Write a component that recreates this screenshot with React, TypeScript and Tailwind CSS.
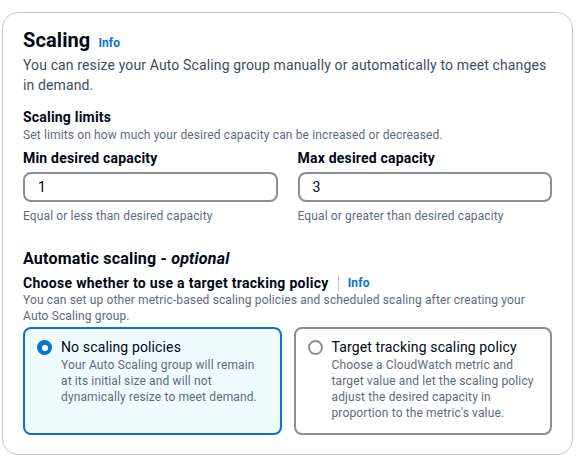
import React from 'react'

const font = { fontFamily: 'Roboto, "Open Sans", sans-serif' }

function Radio({ checked }: { checked?: boolean }) {
  return checked ? (
    <span className="mt-[3px] flex h-[15px] w-[15px] shrink-0 items-center justify-center rounded-full bg-[#0972d3]">
      <span className="h-[6px] w-[6px] rounded-full bg-white" />
    </span>
  ) : (
    <span className="mt-[3px] h-[15px] w-[15px] shrink-0 rounded-full border-2 border-[#8c8c94] bg-white" />
  )
}

function Tile({ checked, title, text }: { checked?: boolean; title: string; text: string }) {
  return (
    <div
      className={
        'flex gap-[9px] rounded-lg border-2 px-[12px] pt-[8px] pb-[12px] ' +
        (checked ? 'border-[#0972d3] bg-[#f0fbff]' : 'border-[#8c8c94] bg-white')
      }
    >
      <Radio checked={checked} />
      <div>
        <div className="text-[14px] leading-[20px] text-[#000716]">{title}</div>
        <div className="text-[12px] leading-[16px] text-[#5f6b7a]">{text}</div>
      </div>
    </div>
  )
}

function Field({ label, value, hint }: { label: string; value: string; hint: string }) {
  return (
    <div className="flex flex-col">
      <div className="text-[14px] font-bold leading-[20px] tracking-[0.2px] text-[#000716]">{label}</div>
      <div className="mt-[4px] flex h-[30px] items-center rounded-lg border-2 border-[#8c8c94] px-[13px] text-[14px] text-[#000716]">
        {value}
      </div>
      <div className="mt-[6px] text-[12px] leading-[16px] text-[#5f6b7a]">{hint}</div>
    </div>
  )
}

export default function App() {
  return (
    <div className="h-[469px] w-[585px] bg-white pt-[12px] pl-[2px] tracking-[0.13px]" style={font}>
      <div className="h-[443px] w-[571px] rounded-2xl border border-[#c6c6cd] px-[20px] pt-[15px]">
        <div className="flex items-baseline gap-[8px]">
          <h2 className="text-[20px] font-bold leading-[24px] tracking-[0.1px] text-[#000716]">Scaling</h2>
          <a className="text-[12px] font-bold text-[#0972d3]">Info</a>
        </div>
        <p className="mt-[3px] text-[14px] leading-[20px] text-[#414d5c]">
          You can resize your Auto Scaling group manually or automatically to meet changes in demand.
        </p>

        <div className="mt-[12px] text-[14px] font-bold leading-[20px] tracking-[0.2px] text-[#000716]">
          Scaling limits
        </div>
        <div className="text-[12px] leading-[16px] text-[#5f6b7a]">
          Set limits on how much your desired capacity can be increased or decreased.
        </div>

        <div className="mt-[5px] grid grid-cols-2 gap-[20px]">
          <Field label="Min desired capacity" value="1" hint="Equal or less than desired capacity" />
          <Field label="Max desired capacity" value="3" hint="Equal or greater than desired capacity" />
        </div>

        <h3 className="mt-[24px] text-[16px] font-bold leading-[22px] tracking-[0.2px] text-[#000716]">
          Automatic scaling - <i>optional</i>
        </h3>
        <div className="mt-[4px] flex items-center text-[14px] leading-[18px]">
          <span className="font-bold tracking-[0.3px] text-[#000716]">
            Choose whether to use a target tracking policy
          </span>
          <span className="mx-[9px] h-[16px] w-px bg-[#c6c6cd]" />
          <a className="text-[12px] font-bold text-[#0972d3]">Info</a>
        </div>
        <div className="text-[12px] leading-[16px] text-[#5f6b7a]">
          You can set up other metric-based scaling policies and scheduled scaling after creating your Auto Scaling
          group.
        </div>

        <div className="mt-[3px] grid grid-cols-2 gap-[12px]">
          <Tile
            checked
            title="No scaling policies"
            text="Your Auto Scaling group will remain at its initial size and will not dynamically resize to meet demand."
          />
          <Tile
            title="Target tracking scaling policy"
            text="Choose a CloudWatch metric and target value and let the scaling policy adjust the desired capacity in proportion to the metric's value."
          />
        </div>
      </div>
    </div>
  )
}
